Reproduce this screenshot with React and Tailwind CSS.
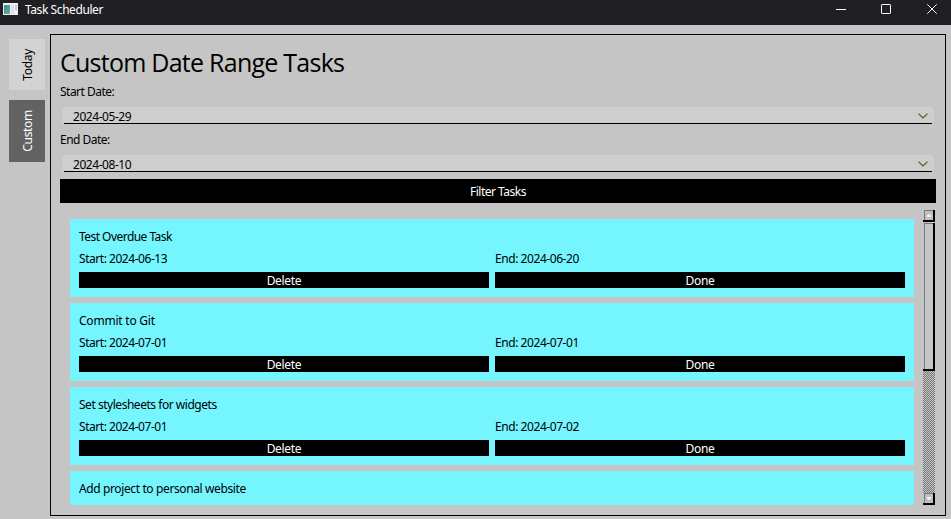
import React from "react";

const tasks = [
  { title: "Test Overdue Task", tracking: "tracking-[-0.54px]", start: "2024-06-13", end: "2024-06-20" },
  { title: "Commit to Git", tracking: "tracking-[-0.22px]", start: "2024-07-01", end: "2024-07-01" },
  { title: "Set stylesheets for widgets", tracking: "tracking-[-0.47px]", start: "2024-07-01", end: "2024-07-02" },
];

function TitleBar() {
  return (
    <header className="flex h-[25px] shrink-0 items-start bg-[#202024] text-white">
      <svg className="ml-[3px] mt-[3px]" width="15" height="12" viewBox="0 0 15 12" shapeRendering="crispEdges">
        <defs>
          <linearGradient id="pane" x1="0" y1="0" x2="1" y2="1">
            <stop offset="0" stopColor="#4c82a8" />
            <stop offset="1" stopColor="#62b580" />
          </linearGradient>
        </defs>
        <rect width="15" height="12" fill="#eef0f1" />
        <rect x="1" y="2" width="6" height="9" fill="url(#pane)" />
        <rect x="8" y="2" width="3" height="9" fill="#dfe3e5" />
        <rect x="12" y="2" width="2" height="5" fill="#c3ccd0" />
      </svg>
      <h1 className="ml-[7px] mt-[1px] text-[12px] leading-[18px] tracking-[-0.42px]">Task Scheduler</h1>
      <svg className="ml-auto mr-[13px] mt-[4px]" width="103" height="11" viewBox="0 0 103 11" fill="none" stroke="#fff">
        <path d="M1 5.5h10" />
        <rect x="46.5" y="0.5" width="9" height="9" rx="0.6" />
        <path d="M92.3 0.3l9.4 9.4M101.7 0.3l-9.4 9.4" />
      </svg>
    </header>
  );
}

function DateField({ label, value }) {
  return (
    <div>
      <div className="h-[24px] text-[12px] leading-[18px] tracking-[-0.52px]">{label}</div>
      <div className="mx-[2px] flex h-[17px] rounded-[4px] bg-[#cecece]">
        <div className="mx-[2px] flex h-[17px] flex-1 items-center justify-between border-b border-black pl-[9px] pr-[4px]">
          <span className="pt-[4px] text-[12px] leading-[16px] tracking-[-0.45px]">{value}</span>
          <svg className="mt-[2px]" width="10" height="6" viewBox="0 0 10 6" fill="none" stroke="#6b5120" strokeWidth="1.2">
            <path d="M0.5 0.6L5 5L9.5 0.6" />
          </svg>
        </div>
      </div>
    </div>
  );
}

function TaskCard({ task }) {
  return (
    <div className="h-[78px] shrink-0 bg-[#75f6ff] px-[9px] pt-[9px] text-[12px] leading-[18px]">
      <div className={task.tracking}>{task.title}</div>
      <div className="mt-[4px] grid grid-cols-2 gap-x-[6px]">
        <span className="tracking-[-0.46px]">Start: {task.start}</span>
        <span className="tracking-[-0.44px]">End: {task.end}</span>
        <button className="mt-[4px] h-[16px] bg-black pt-px leading-[16px] tracking-[-0.3px] text-white">Delete</button>
        <button className="mt-[4px] h-[16px] bg-black pt-px leading-[16px] tracking-[-0.3px] text-white">Done</button>
      </div>
    </div>
  );
}

function ArrowButton({ down }) {
  return (
    <div className="flex h-[12px] w-[12px] shrink-0 border-b-2 border-r-2 border-black">
      <div className="ml-[1px] flex flex-1 items-center justify-center border-l border-t border-[#787878] bg-[#bfbfbf]">
        <svg width="4" height="3" viewBox="0 0 4 3" fill="#f4f4f4">
          <path d={down ? "M0 0h4v1.5L2 3L0 1.5z" : "M0 3h4V1.5L2 0L0 1.5z"} />
        </svg>
      </div>
    </div>
  );
}

function ScrollBar() {
  return (
    <div className="flex w-[12px] shrink-0 flex-col">
      <ArrowButton />
      <div className="mt-[1px] flex h-[148px] shrink-0 border-b-2 border-r-2 border-black">
        <div className="ml-[1px] flex-1 border-l border-t border-[#787878]" />
      </div>
      <div className="flex-1 bg-[repeating-conic-gradient(#787878_0_25%,#c5c5c5_0_50%)] bg-[length:2px_2px]" />
      <ArrowButton down />
    </div>
  );
}

export default function App() {
  return (
    <div className="flex h-[519px] w-[951px] flex-col overflow-hidden bg-[#c5c5c5] font-['Noto_Sans',sans-serif] text-black">
      <TitleBar />
      <div className="flex min-h-0 flex-1 pl-[9px] pr-[5px]">
        <nav className="flex w-[41px] shrink-0 flex-col gap-[10px] pt-[14px] text-[12px] leading-[18px]">
          <button className="flex h-[51px] w-[36px] items-center justify-center bg-[#d3d3d3]">
            <span className="ml-[2px] rotate-180 tracking-[-0.3px] [writing-mode:vertical-rl]">Today</span>
          </button>
          <button className="flex h-[62px] w-[36px] items-center justify-center bg-[#626262] text-white">
            <span className="ml-[2px] rotate-180 tracking-[-0.3px] [writing-mode:vertical-rl]">Custom</span>
          </button>
        </nav>
        <main className="mb-[3px] mt-[9px] flex min-w-0 flex-1 flex-col border border-black px-[9px]">
          <h2 className="mt-[9px] h-[39px] font-['Open_Sans','Noto_Sans',sans-serif] text-[25px] font-normal leading-[36px] tracking-[-0.75px]">Custom Date Range Tasks</h2>
          <DateField label="Start Date:" value="2024-05-29" />
          <div className="h-[7px] shrink-0" />
          <DateField label="End Date:" value="2024-08-10" />
          <button className="mt-[7px] h-[24px] shrink-0 bg-black pt-[2px] text-[12px] leading-[22px] tracking-[-0.5px] text-white">
            Filter Tasks
          </button>
          <div className="mb-[10px] ml-[10px] mr-[1px] mt-[7px] flex min-h-0 flex-1 justify-between">
            <div className="mt-[9px] flex w-[844px] flex-col gap-[6px] overflow-hidden">
              {tasks.map((task) => (
                <TaskCard key={task.title} task={task} />
              ))}
              <div className="flex-1 bg-[#75f6ff] px-[9px] pt-[9px] text-[12px] leading-[18px] tracking-[-0.38px]">
                Add project to personal website
              </div>
            </div>
            <ScrollBar />
          </div>
        </main>
      </div>
    </div>
  );
}
